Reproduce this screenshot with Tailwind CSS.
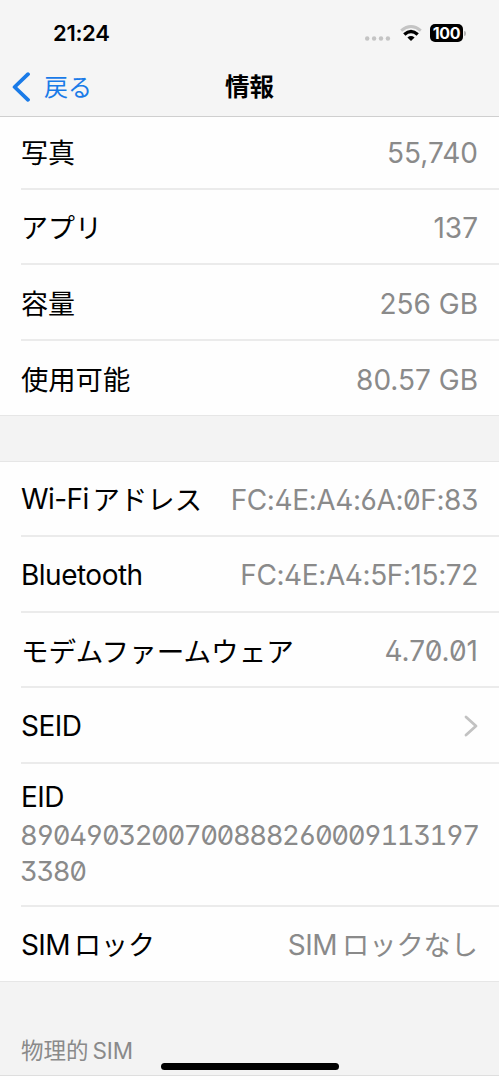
<!DOCTYPE html>
<html lang="ja">
<head>
<meta charset="utf-8">
<title>情報</title>
<script src="https://cdn.jsdelivr.net/npm/@tailwindcss/browser@4"></script>
</head>
<body class="bg-[#f3f3f3]">
<div class="w-[499px] h-[1080px] overflow-hidden relative flex flex-col font-['Inter','Noto_Sans_CJK_JP',sans-serif] text-[28px] leading-[36px] text-black whitespace-nowrap">
  <header class="h-[117px] shrink-0 bg-[#f5f5f5] border-b border-[#cfcfcf]">
    <div class="h-[60px] pt-[6px] pl-[53px] pr-[33px] flex items-center justify-between">
      <span class="text-[22px] leading-[30px] font-semibold tracking-[-0.3px]">21:24</span>
      <div class="flex items-center">
        <svg class="w-[26px] h-[20px] mr-[9px]" viewBox="0 0 26 20" fill="#c4c4c4"><circle cx="2.2" cy="15.5" r="2.2"/><circle cx="9.1" cy="15.5" r="2.2"/><circle cx="16" cy="15.5" r="2.2"/><circle cx="22.9" cy="15.5" r="2.2"/></svg>
        <svg class="w-[22px] h-[18px] mr-[8px]" viewBox="0 0 22 18" fill="none"><path d="M1.2 6.6Q11-1.6 20.8 6.6" stroke="#c4c4c4" stroke-width="2.8"/><path d="M4.3 10.4Q11 4.4 17.7 10.4" stroke="#000" stroke-width="3.4"/><path d="M7.4 13.4Q11 10.6 14.6 13.4L11 16.9Z" fill="#000"/></svg>
        <span class="w-[33px] h-[18px] rounded-[5px] bg-black text-white text-[16px] leading-[18px] font-bold text-center tracking-[-0.3px]">100</span>
        <span class="w-[2px] h-[5px] ml-px rounded-r-full bg-[#b5b5b5]"></span>
      </div>
    </div>
    <div class="h-[54px] grid grid-cols-3 items-center">
      <div class="flex items-center pl-[12px] text-[#1a7be8]">
        <svg class="w-[18px] h-[30px] mr-[14px]" viewBox="0 0 18 30" fill="none" stroke="currentColor" stroke-width="3.8" stroke-linecap="round" stroke-linejoin="round"><path d="M16 2.2L2.6 15L16 27.8"/></svg>
        <span class="text-[24px] pt-px">戻る</span>
      </div>
      <h1 class="text-center text-[24.5px] font-bold">情報</h1>
    </div>
  </header>

  <section class="h-[299px] shrink-0 bg-[#fefefe] pl-[21px] border-b border-[#e6e6e6]">
    <div class="h-[73px] pr-[21px] border-b-2 border-[#ebebeb] flex items-center justify-between"><span class="text-[27px] pt-[3px]">写真</span><span class="text-[#8a8a8a]">55,740</span></div>
    <div class="h-[75px] pt-[2px] pr-[21px] border-b-2 border-[#ebebeb] flex items-center justify-between"><span class="text-[27px] pt-[2px]">アプリ</span><span class="text-[#8a8a8a]">137</span></div>
    <div class="h-[76px] pt-[3px] pr-[21px] border-b-2 border-[#ebebeb] flex items-center justify-between"><span class="text-[27px] pt-[3px]">容量</span><span class="text-[#8a8a8a]">256 GB</span></div>
    <div class="h-[75px] pt-[2px] pr-[21px] flex items-center justify-between"><span class="text-[27.3px] pt-[2px]">使用可能</span><span class="text-[#8a8a8a]">80.57 GB</span></div>
  </section>

  <section class="h-[521px] mt-[45px] shrink-0 bg-[#fefefe] pl-[21px] border-y border-[#e6e6e6]">
    <div class="h-[75px] pt-[2px] pr-[21px] border-b-2 border-[#ebebeb] flex items-center justify-between"><span class="flex gap-[4px]"><span class="tracking-[-0.6px]">Wi-Fi</span><span class="text-[27.4px] pt-px">アドレス</span></span><span class="text-[#8a8a8a] tracking-[-0.4px] [font-feature-settings:'zero','ss01']">FC:4E:A4:6A:0F:83</span></div>
    <div class="h-[76px] pt-[2px] pr-[21px] border-b-2 border-[#ebebeb] flex items-center justify-between"><span class="tracking-[-0.5px]">Bluetooth</span><span class="text-[#8a8a8a] tracking-[-0.4px] [font-feature-settings:'zero','ss01']">FC:4E:A4:5F:15:72</span></div>
    <div class="h-[75px] pt-[2px] pr-[21px] border-b-2 border-[#ebebeb] flex items-center justify-between"><span class="text-[27.6px] pt-[2px]">モデムファームウェア</span><span class="text-[#8a8a8a] [font-feature-settings:'zero','ss01']">4.70.01</span></div>
    <div class="h-[76px] pt-[2px] pr-[21px] border-b-2 border-[#ebebeb] flex items-center justify-between"><span class="tracking-[-0.5px]">SEID</span>
      <svg class="w-[14px] h-[22px]" viewBox="0 0 14 22" fill="none" stroke="#c2c2c2" stroke-width="2.8" stroke-linecap="round" stroke-linejoin="round"><path d="M2 2L12 11L2 20"/></svg></div>
    <div class="h-[143px] pt-[15px] border-b-2 border-[#ebebeb]"><div class="tracking-[-0.5px]">EID</div><div class="-ml-px text-[27.5px] text-[#8a8a8a] mt-[2px] tracking-[-1.45px] [font-feature-settings:'zero','ss01','tnum']">8904903200700888260009113197<br>3380</div></div>
    <div class="h-[75px] pt-px pr-[21px] flex items-center justify-between"><span class="flex gap-[4px]"><span class="tracking-[-0.6px]">SIM</span><span class="text-[27px] pt-px">ロック</span></span><span class="flex gap-[5px] text-[#8a8a8a]"><span class="tracking-[-0.5px]">SIM</span><span class="text-[27.2px] pt-px">ロックなし</span></span></div>
  </section>

  <footer class="h-[94px] shrink-0 pl-[21px] pt-[51px] border-b border-[#dedede] text-[#8a8a8a] flex gap-[4px] text-[22.5px]"><span>物理的</span><span class="tracking-[-0.1px]">SIM</span></footer>
  <div class="h-[4px] bg-[#fefefe]"></div>
  <div class="absolute left-[161px] top-[1063px] w-[178px] h-[7px] rounded-full bg-black"></div>
</div>
</body>
</html>
